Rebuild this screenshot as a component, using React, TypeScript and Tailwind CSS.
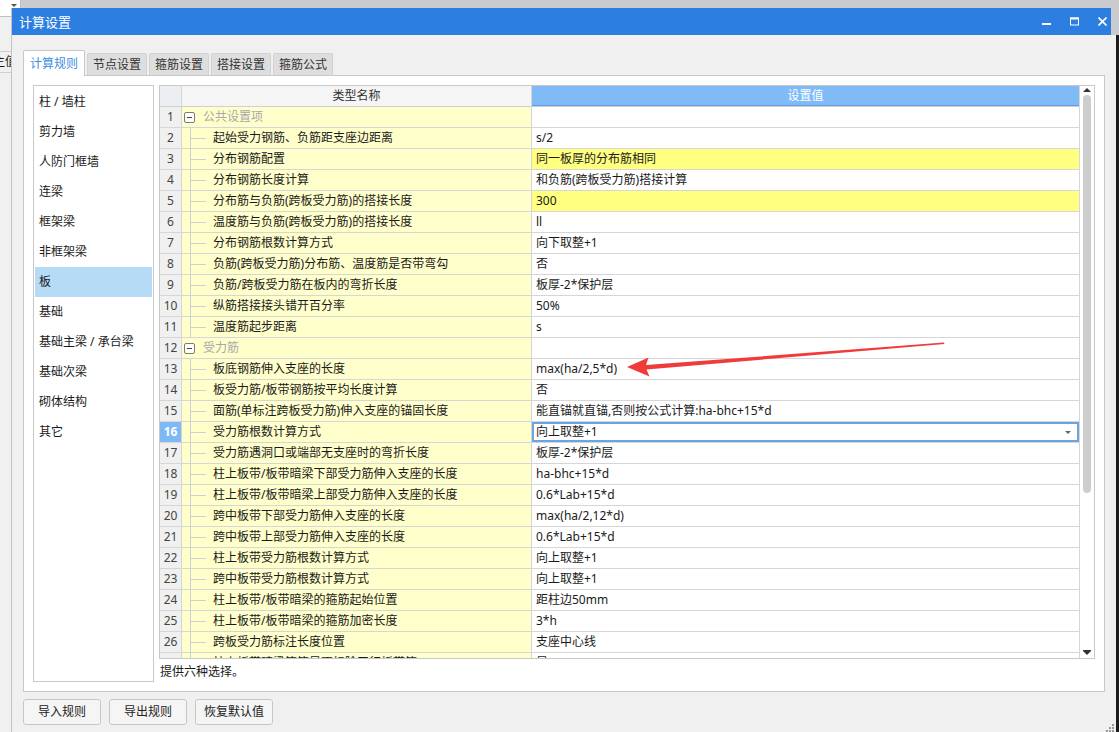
import React from 'react';

type Row = {
  n: number;
  name: string;
  value?: string;
  group?: boolean;
  hl?: boolean;
  selected?: boolean;
};

const rows: Row[] = [
  { n: 1, name: '公共设置项', group: true },
  { n: 2, name: '起始受力钢筋、负筋距支座边距离', value: 's/2' },
  { n: 3, name: '分布钢筋配置', value: '同一板厚的分布筋相同', hl: true },
  { n: 4, name: '分布钢筋长度计算', value: '和负筋(跨板受力筋)搭接计算' },
  { n: 5, name: '分布筋与负筋(跨板受力筋)的搭接长度', value: '300', hl: true },
  { n: 6, name: '温度筋与负筋(跨板受力筋)的搭接长度', value: 'll' },
  { n: 7, name: '分布钢筋根数计算方式', value: '向下取整+1' },
  { n: 8, name: '负筋(跨板受力筋)分布筋、温度筋是否带弯勾', value: '否' },
  { n: 9, name: '负筋/跨板受力筋在板内的弯折长度', value: '板厚-2*保护层' },
  { n: 10, name: '纵筋搭接接头错开百分率', value: '50%' },
  { n: 11, name: '温度筋起步距离', value: 's' },
  { n: 12, name: '受力筋', group: true },
  { n: 13, name: '板底钢筋伸入支座的长度', value: 'max(ha/2,5*d)' },
  { n: 14, name: '板受力筋/板带钢筋按平均长度计算', value: '否' },
  { n: 15, name: '面筋(单标注跨板受力筋)伸入支座的锚固长度', value: '能直锚就直锚,否则按公式计算:ha-bhc+15*d' },
  { n: 16, name: '受力筋根数计算方式', value: '向上取整+1', selected: true },
  { n: 17, name: '受力筋遇洞口或端部无支座时的弯折长度', value: '板厚-2*保护层' },
  { n: 18, name: '柱上板带/板带暗梁下部受力筋伸入支座的长度', value: 'ha-bhc+15*d' },
  { n: 19, name: '柱上板带/板带暗梁上部受力筋伸入支座的长度', value: '0.6*Lab+15*d' },
  { n: 20, name: '跨中板带下部受力筋伸入支座的长度', value: 'max(ha/2,12*d)' },
  { n: 21, name: '跨中板带上部受力筋伸入支座的长度', value: '0.6*Lab+15*d' },
  { n: 22, name: '柱上板带受力筋根数计算方式', value: '向上取整+1' },
  { n: 23, name: '跨中板带受力筋根数计算方式', value: '向上取整+1' },
  { n: 24, name: '柱上板带/板带暗梁的箍筋起始位置', value: '距柱边50mm' },
  { n: 25, name: '柱上板带/板带暗梁的箍筋加密长度', value: '3*h' },
  { n: 26, name: '跨板受力筋标注长度位置', value: '支座中心线' },
  { n: 27, name: '柱上板带暗梁箍筋是否扣除平行板带筋', value: '是' },
];

const categories = [
  '柱 / 墙柱',
  '剪力墙',
  '人防门框墙',
  '连梁',
  '框架梁',
  '非框架梁',
  '板',
  '基础',
  '基础主梁 / 承台梁',
  '基础次梁',
  '砌体结构',
  '其它',
];

const tabs = ['计算规则', '节点设置', '箍筋设置', '搭接设置', '箍筋公式'];

function TitleBar() {
  return (
    <div className="flex h-[27px] shrink-0 items-center bg-[#2c7fe0] pl-[7px] text-white">
      <span className="text-[13px] leading-[16px]">计算设置</span>
      <div className="ml-auto flex items-center gap-[19px] pr-[4px]">
        <svg width="9" height="9" viewBox="0 0 9 9">
          <rect x="0" y="6" width="9" height="2" fill="#fff" />
        </svg>
        <svg width="9" height="9" viewBox="0 0 9 9" fill="none">
          <rect x="0.5" y="1" width="8" height="7" stroke="#fff" strokeWidth="1" />
          <rect x="0" y="0.5" width="9" height="2" fill="#fff" />
        </svg>
        <svg width="9" height="9" viewBox="0 0 9 9">
          <path d="M0.5 0.5 L8.5 8.5 M8.5 0.5 L0.5 8.5" stroke="#fff" strokeWidth="1.6" />
        </svg>
      </div>
    </div>
  );
}

function TabBar() {
  return (
    <div className="flex h-[25px] items-end gap-[2px]">
      {tabs.map((t, i) =>
        i === 0 ? (
          <div
            key={t}
            className="relative z-10 -mb-px flex h-[26px] items-center rounded-t-[2px] border border-b-0 border-[#c8c8c8] bg-white px-[6px] leading-[16px] text-[#3b8ee2]"
          >
            {t}
          </div>
        ) : (
          <div
            key={t}
            className="flex h-[22px] items-center rounded-t-[2px] border border-b-0 border-[#d2d2d2] bg-[#dedede] px-[5px] pt-[1px] leading-[16px] text-[#333]"
          >
            {t}
          </div>
        )
      )}
    </div>
  );
}

function CategoryList() {
  return (
    <div className="h-full w-[121px] shrink-0 border border-[#c8c8c8] bg-white p-[1px]">
      {categories.map((c) => (
        <div
          key={c}
          className={`flex h-[30px] items-center pl-[4px] leading-[16px] ${c === '板' ? 'bg-[#b6dbf6]' : ''}`}
        >
          {c}
        </div>
      ))}
    </div>
  );
}

function TreeLines({ group }: { group?: boolean }) {
  if (group) {
    return (
      <div className="ml-[2px] mr-[8px] flex h-[11px] w-[11px] items-center justify-center rounded-[2px] border border-[#7a7a7a] bg-white">
        <div className="h-px w-[5px] bg-[#444]" />
      </div>
    );
  }
  return (
    <div className="relative h-full w-[31px] shrink-0">
      <div className="absolute left-[8px] top-0 h-full w-px bg-[#cfcfcf]" />
      <div className="absolute left-[9px] top-[10px] h-px w-[15px] bg-[#cfcfcf]" />
    </div>
  );
}

function TableRow({ row }: { row: Row }) {
  return (
    <div className="flex h-[21px] shrink-0 border-b border-[#d6d6d6]">
      <div
        className={`flex w-[22px] shrink-0 items-center justify-center border-r border-[#d6d6d6] text-[12px] ${
          row.selected ? 'bg-[#7eb9f6] font-bold text-white' : 'bg-[#f0f0f0] text-[#444]'
        }`}
      >
        {row.n}
      </div>
      <div className="flex w-[350px] shrink-0 items-center border-r border-[#d6d6d6] bg-[#ffffcc] leading-[16px]">
        <TreeLines group={row.group} />
        <span className={row.group ? 'text-[#a8a8a8]' : ''}>{row.name}</span>
      </div>
      <div
        className={`relative flex min-w-0 flex-1 items-center whitespace-nowrap pl-[4px] leading-[16px] ${
          row.hl ? 'bg-[#ffff80]' : 'bg-white'
        } ${row.selected ? 'shadow-[inset_0_0_0_2px_#69a5e4]' : ''}`}
      >
        {row.value}
        {row.selected && (
          <div className="absolute right-[8px] top-[9px] h-0 w-0 border-x-[3px] border-t-[3px] border-x-transparent border-t-[#666]" />
        )}
      </div>
    </div>
  );
}

function ScrollBar() {
  return (
    <div className="relative w-[15px] shrink-0 border-l border-[#d6d6d6] bg-white">
      <div className="absolute left-[3px] top-[2px] h-0 w-0 border-x-[4px] border-b-[4px] border-x-transparent border-b-[#333]" />
      <div className="absolute left-[3px] top-[9px] h-[398px] w-[8px] rounded-full bg-[#cdcdcd]" />
      <div className="absolute bottom-[3px] left-[3px] flex flex-col">
        <div className="h-px w-[8px] bg-[#333]" />
        <div className="h-0 w-0 border-x-[4px] border-t-[4px] border-x-transparent border-t-[#333]" />
      </div>
    </div>
  );
}

function RuleTable() {
  return (
    <div className="flex h-[574px] shrink-0 border border-[#c8c8c8] bg-white">
      <div className="flex min-w-0 flex-1 flex-col overflow-hidden">
        <div className="flex h-[21px] shrink-0 border-b border-[#d0d0d0]">
          <div className="w-[22px] shrink-0 border-r border-[#d6d6d6] bg-[#eceef2]" />
          <div className="flex w-[350px] shrink-0 items-center justify-center border-r border-[#d6d6d6] bg-[#f5f5f5] leading-[16px] text-[#333]">
            类型名称
          </div>
          <div className="flex flex-1 items-center justify-center border-b border-[#5d9fe6] bg-[#80bbf8] leading-[16px] text-white">
            设置值
          </div>
        </div>
        {rows.map((r) => (
          <TableRow key={r.n} row={r} />
        ))}
      </div>
      <ScrollBar />
    </div>
  );
}

function Arrow() {
  return (
    <svg className="pointer-events-none absolute left-0 top-0" width="1119" height="732">
      <polygon
        points="627,367 648.5,357.5 646,365 944,342.6 944.4,344 646.5,369.5 649.5,376.5"
        fill="#f03b3b"
      />
    </svg>
  );
}

function ResizeGrip() {
  const dots = [
    [6, 0],
    [3, 3],
    [6, 3],
    [0, 6],
    [3, 6],
    [6, 6],
  ];
  return (
    <svg className="absolute left-[1106px] top-[724px]" width="8" height="8">
      {dots.map(([x, y]) => (
        <rect key={`${x}-${y}`} x={x} y={y} width="2" height="2" fill="#9a9a9a" />
      ))}
    </svg>
  );
}

export default function App() {
  return (
    <div className="relative h-[732px] w-[1119px] overflow-hidden bg-[#f0f0f0] font-['Noto_Sans','Noto_Sans_CJK_SC',sans-serif] text-[12px] text-[#1a1a1a]">
      {/* window underneath */}
      <div className="h-[8px] bg-[#c9cbce]" />
      <div className="absolute left-0 top-0 h-[17px] w-[21px] border-b border-r border-[#bfbfbf] bg-white">
        <div className="absolute left-[11px] top-[4px] h-0 w-0 border-x-[3px] border-t-[3px] border-x-transparent border-t-[#555]" />
      </div>
      <div className="absolute left-0 top-[51px] flex h-[22px] w-[11px] items-center overflow-hidden border-y border-[#d0d0d0]">
        <span className="ml-[-7px] whitespace-nowrap leading-[16px]">主值</span>
      </div>
      <div className="absolute right-0 top-0 flex h-full w-[8px] flex-col">
        <div className="h-[35px] bg-[#c9cbce]" />
        <div className="flex flex-1">
          <div className="w-[5px] bg-[#f0f0f0]" />
          <div className="flex-1 bg-[#1c1c1c]" />
        </div>
      </div>

      {/* dialog */}
      <div className="absolute left-[11px] top-[8px] flex h-[724px] w-[1100px] flex-col border-l border-[#c4c4c4] bg-[#f0f0f0]">
        <TitleBar />
        <div className="flex flex-1 flex-col pl-[11px] pr-[6px] pt-[15px]">
          <TabBar />
          <div className="flex h-[617px] shrink-0 gap-[5px] border border-[#c8c8c8] bg-white p-[9px]">
            <CategoryList />
            <div className="flex min-w-0 flex-1 flex-col">
              <RuleTable />
              <div className="mt-[5px] pl-[1px] leading-[16px]">提供六种选择。</div>
            </div>
          </div>
          <div className="mt-[7px] flex gap-[8px]">
            {['导入规则', '导出规则', '恢复默认值'].map((b) => (
              <div
                key={b}
                className="flex h-[26px] w-[78px] items-center justify-center rounded-[3px] border border-[#c6c6c6] bg-[#f5f5f5] leading-[16px] text-[#222]"
              >
                {b}
              </div>
            ))}
          </div>
        </div>
      </div>
      <ResizeGrip />
      <Arrow />
    </div>
  );
}
